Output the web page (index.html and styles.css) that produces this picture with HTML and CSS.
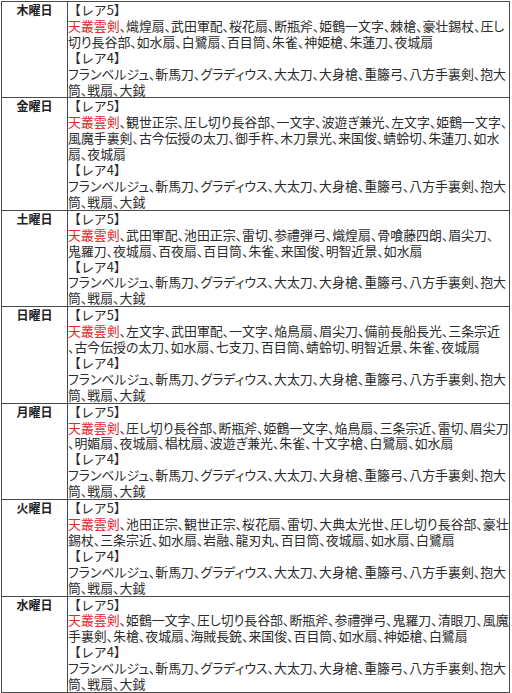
FILE: index.html
```html
<!DOCTYPE html>
<html lang="ja">
<head>
<meta charset="utf-8">
<link rel="stylesheet" href="styles.css">
</head>
<body>
<table class="schedule">
<colgroup><col class="c-day"><col class="c-list"></colgroup>
<tr>
<th class="day">木曜日</th>
<td class="list">
<div class="ln rank">【レア5】</div>
<div class="ln"><span class="hot">天叢雲剣</span>、熾煌扇、武田軍配、桜花扇、断瓶斧、姫鶴一文字、棘槍、豪壮錫杖、圧し</div>
<div class="ln">切り長谷部、如水扇、白鷺扇、百目筒、朱雀、神姫槍、朱蓮刀、夜城扇</div>
<div class="ln rank">【レア4】</div>
<div class="ln">フランベルジュ、斬馬刀、グラディウス、大太刀、大身槍、重籐弓、八方手裏剣、抱大</div>
<div class="ln">筒、戦扇、大鉞</div>
</td>
</tr>
<tr>
<th class="day">金曜日</th>
<td class="list">
<div class="ln rank">【レア5】</div>
<div class="ln"><span class="hot">天叢雲剣</span>、観世正宗、圧し切り長谷部、一文字、波遊ぎ兼光、左文字、姫鶴一文字、</div>
<div class="ln">風魔手裏剣、古今伝授の太刀、御手杵、木刀景光、来国俊、蜻蛉切、朱蓮刀、如水</div>
<div class="ln">扇、夜城扇</div>
<div class="ln rank">【レア4】</div>
<div class="ln">フランベルジュ、斬馬刀、グラディウス、大太刀、大身槍、重籐弓、八方手裏剣、抱大</div>
<div class="ln">筒、戦扇、大鉞</div>
</td>
</tr>
<tr>
<th class="day">土曜日</th>
<td class="list">
<div class="ln rank">【レア5】</div>
<div class="ln"><span class="hot">天叢雲剣</span>、武田軍配、池田正宗、雷切、参禮弾弓、熾煌扇、骨喰藤四朗、眉尖刀、</div>
<div class="ln">鬼羅刀、夜城扇、百夜扇、百目筒、朱雀、来国俊、明智近景、如水扇</div>
<div class="ln rank">【レア4】</div>
<div class="ln">フランベルジュ、斬馬刀、グラディウス、大太刀、大身槍、重籐弓、八方手裏剣、抱大</div>
<div class="ln">筒、戦扇、大鉞</div>
</td>
</tr>
<tr>
<th class="day">日曜日</th>
<td class="list">
<div class="ln rank">【レア5】</div>
<div class="ln"><span class="hot">天叢雲剣</span>、左文字、武田軍配、一文字、焔鳥扇、眉尖刀、備前長船長光、三条宗近</div>
<div class="ln">、古今伝授の太刀、如水扇、七支刀、百目筒、蜻蛉切、明智近景、朱雀、夜城扇</div>
<div class="ln rank">【レア4】</div>
<div class="ln">フランベルジュ、斬馬刀、グラディウス、大太刀、大身槍、重籐弓、八方手裏剣、抱大</div>
<div class="ln">筒、戦扇、大鉞</div>
</td>
</tr>
<tr>
<th class="day">月曜日</th>
<td class="list">
<div class="ln rank">【レア5】</div>
<div class="ln"><span class="hot">天叢雲剣</span>、圧し切り長谷部、断瓶斧、姫鶴一文字、焔鳥扇、三条宗近、雷切、眉尖刀</div>
<div class="ln">、明媚扇、夜城扇、椙枕扇、波遊ぎ兼光、朱雀、十文字槍、白鷺扇、如水扇</div>
<div class="ln rank">【レア4】</div>
<div class="ln">フランベルジュ、斬馬刀、グラディウス、大太刀、大身槍、重籐弓、八方手裏剣、抱大</div>
<div class="ln">筒、戦扇、大鉞</div>
</td>
</tr>
<tr>
<th class="day">火曜日</th>
<td class="list">
<div class="ln rank">【レア5】</div>
<div class="ln"><span class="hot">天叢雲剣</span>、池田正宗、観世正宗、桜花扇、雷切、大典太光世、圧し切り長谷部、豪壮</div>
<div class="ln">錫杖、三条宗近、如水扇、岩融、龍刃丸、百目筒、夜城扇、如水扇、白鷺扇</div>
<div class="ln rank">【レア4】</div>
<div class="ln">フランベルジュ、斬馬刀、グラディウス、大太刀、大身槍、重籐弓、八方手裏剣、抱大</div>
<div class="ln">筒、戦扇、大鉞</div>
</td>
</tr>
<tr>
<th class="day">水曜日</th>
<td class="list">
<div class="ln rank">【レア5】</div>
<div class="ln"><span class="hot">天叢雲剣</span>、姫鶴一文字、圧し切り長谷部、断瓶斧、参禮弾弓、鬼羅刀、清眼刀、風魔</div>
<div class="ln">手裏剣、朱槍、夜城扇、海賊長銃、来国俊、百目筒、如水扇、神姫槍、白鷺扇</div>
<div class="ln rank">【レア4】</div>
<div class="ln">フランベルジュ、斬馬刀、グラディウス、大太刀、大身槍、重籐弓、八方手裏剣、抱大</div>
<div class="ln">筒、戦扇、大鉞</div>
</td>
</tr>
</table>
</body>
</html>
```

FILE: styles.css
```css
html, body {
  margin: 0;
  padding: 0;
  background: #ffffff;
}

body {
  padding: 1px 0 0 1px;
}

.schedule {
  border-collapse: collapse;
  width: 509px;
  table-layout: fixed;
  color: #2b2b2b;
}

.c-day {
  width: 66px;
}

.schedule th,
.schedule td {
  border: 1px solid #4a4a4a;
  vertical-align: top;
  padding: 0;
}

.day {
  font-family: "Noto Sans CJK JP", "Noto Sans", sans-serif;
  font-weight: bold;
  font-size: 12px;
  line-height: 15.9px;
  text-align: center;
  color: #222222;
}

.list {
  padding: 0 0 0 5px;
  font-family: "Noto Sans CJK JP", "Noto Sans", sans-serif;
  font-size: 12.9px;
  line-height: 15.9px;
  font-feature-settings: "palt" 1;
}

.ln {
  white-space: nowrap;
}

.rank {
  font-feature-settings: normal;
}

.hot {
  color: #e3262b;
}
```
